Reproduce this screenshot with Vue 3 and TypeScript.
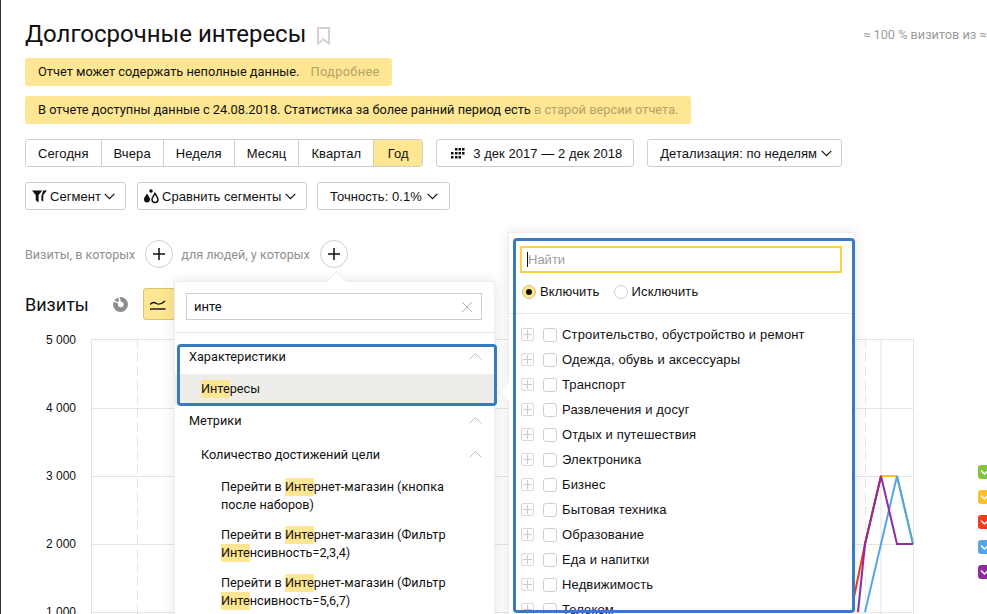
<script setup lang="ts">
type Chunk = { text: string; hit?: boolean };

const periods = ['Сегодня', 'Вчера', 'Неделя', 'Месяц', 'Квартал', 'Год'];
const axisLabels = ['5 000', '4 000', '3 000', '2 000', '1 000'];
const legendColors = ['#85c441', '#fdc025', '#f9391c', '#58a5e4', '#8e2d9c'];

const interests = [
  'Строительство, обустройство и ремонт',
  'Одежда, обувь и аксессуары',
  'Транспорт',
  'Развлечения и досуг',
  'Отдых и путешествия',
  'Электроника',
  'Бизнес',
  'Бытовая техника',
  'Образование',
  'Еда и напитки',
  'Недвижимость',
  'Телеком',
];

const goals: Chunk[][][] = [
  [
    [{ text: 'Перейти в ' }, { text: 'Инте', hit: true }, { text: 'рнет-магазин (кнопка' }],
    [{ text: 'после наборов)' }],
  ],
  [
    [{ text: 'Перейти в ' }, { text: 'Инте', hit: true }, { text: 'рнет-магазин (Фильтр' }],
    [{ text: 'Инте', hit: true }, { text: 'нсивность=2,3,4)' }],
  ],
  [
    [{ text: 'Перейти в ' }, { text: 'Инте', hit: true }, { text: 'рнет-магазин (Фильтр' }],
    [{ text: 'Инте', hit: true }, { text: 'нсивность=5,6,7)' }],
  ],
];

const series = [
  { color: '#85c441', points: '806,137 822,205' },
  { color: '#fdc025', points: '774,205 790,137 806,137' },
  { color: '#f9391c', points: '758,282 774,205 790,137' },
  { color: '#58a5e4', points: '774,273 806,137 822,205' },
  { color: '#8e2d9c', points: '767,273 774,205 790,137 806,205 822,205' },
];

const horizontalLines = [0, 69, 137, 205, 273];
</script>

<template>
  <div class="page">
    <div class="title-row">
      <h1 class="title">Долгосрочные интересы</h1>
      <svg class="bookmark" width="13" height="18" viewBox="0 0 13 18">
        <path d="M1 1h11v15.500l-5.500-4-5.500 4z" fill="none" stroke="#d2d2d2" stroke-width="2" />
      </svg>
      <span class="sampling">≈ 100 % визитов из ≈ 100 000</span>
    </div>

    <div class="alert first">
      Отчет может содержать неполные данные.<span class="alert-link gap">Подробнее</span>
    </div>
    <div class="alert second">
      В отчете доступны данные с 24.08.2018. Статистика за более ранний период есть
      <span class="alert-link">в старой версии отчета.</span>
    </div>

    <div class="toolbar periods-row">
      <div class="period-group">
        <button
          v-for="p in periods"
          :key="p"
          class="period"
          :class="{ active: p === 'Год' }"
        >
          {{ p }}
        </button>
      </div>
      <button class="btn date-btn">
        <svg width="15" height="11" viewBox="0 0 15 11" fill="#111">
          <rect x="5" y="0" width="2.500" height="2.500" /><rect x="8.500" y="0" width="2.500" height="2.500" /><rect x="12" y="0" width="2.500" height="2.500" />
          <rect x="1" y="4" width="2.500" height="2.500" /><rect x="5" y="4" width="2.500" height="2.500" /><rect x="8.500" y="4" width="2.500" height="2.500" /><rect x="12" y="4" width="2.500" height="2.500" />
          <rect x="1" y="8" width="2.500" height="2.500" /><rect x="5" y="8" width="2.500" height="2.500" /><rect x="8.500" y="8" width="2.500" height="2.500" />
        </svg>
        3 дек 2017 — 2 дек 2018
      </button>
      <button class="btn detail-btn">
        Детализация: по неделям
        <svg class="chev" width="11" height="7" viewBox="0 0 11 7"><path d="M.7.9l4.800 4.800L10.300.9" /></svg>
      </button>
    </div>

    <div class="toolbar segments-row">
      <button class="btn segment-btn">
        <svg width="15" height="13" viewBox="0 0 16 13" fill="#111">
          <path d="M0 0h11L7 5v8L4 10.500V5z" />
          <path d="M12 0h4l-4 5v7l-2-1.500V6z" />
        </svg>
        Сегмент
        <svg class="chev" width="11" height="7" viewBox="0 0 11 7"><path d="M.7.9l4.800 4.800L10.300.9" /></svg>
      </button>
      <button class="btn compare-btn">
        <svg width="16" height="15" viewBox="0 0 16 15">
          <path d="M4 4.500c1.500 2.500 3 4 3 6a3 3 0 0 1-6 0c0-2 1.500-3.500 3-6z" fill="#111" />
          <path d="M12 4.500c1.500 2.500 3 4 3 6a3 3 0 0 1-6 0c0-2 1.500-3.500 3-6z" fill="none" stroke="#111" stroke-width="1.500" />
          <circle cx="8" cy="2" r="1.800" fill="#111" />
        </svg>
        Сравнить сегменты
        <svg class="chev" width="11" height="7" viewBox="0 0 11 7"><path d="M.7.9l4.800 4.800L10.300.9" /></svg>
      </button>
      <button class="btn accuracy-btn">
        Точность: 0.1%
        <svg class="chev" width="11" height="7" viewBox="0 0 11 7"><path d="M.7.9l4.800 4.800L10.300.9" /></svg>
      </button>
    </div>

    <div class="filter-row">
      <span class="filter-label">Визиты, в которых</span>
      <span class="plus-circle">
        <svg width="12" height="12" viewBox="0 0 12 12"><path d="M6 0v12M0 6h12" stroke="#111" stroke-width="1.500" /></svg>
      </span>
      <span class="filter-label">для людей, у которых</span>
      <span class="plus-circle">
        <svg width="12" height="12" viewBox="0 0 12 12"><path d="M6 0v12M0 6h12" stroke="#111" stroke-width="1.500" /></svg>
      </span>
    </div>

    <div class="chart-head">
      <span class="chart-title">Визиты</span>
      <svg class="pie" width="15" height="15" viewBox="0 0 16 16">
        <path d="M8 0a8 8 0 1 1-8 8c0-1 .2-2 .6-3L5.500 7A3 3 0 1 0 8.500 5L7 .1c.3 0 .7-.1 1-.1z" fill="#8d8d8d" />
        <path d="M5.500 .4L6.500 4 4.500 5.500 1.500 3.500A8 8 0 0 1 5.500 .4z" fill="#8d8d8d" />
      </svg>
      <button class="line-btn">
        <svg width="16" height="12" viewBox="0 0 16 12">
          <path d="M0 6.500c2-2.500 4-2.500 6.500-1s4.500 1 8.500-2.500" fill="none" stroke="#111" stroke-width="1.400" />
          <path d="M0 11h15.500" stroke="#111" stroke-width="1.400" />
        </svg>
      </button>
    </div>

    <div class="chart">
      <div class="axis">
        <div v-for="l in axisLabels" :key="l" class="axis-label">{{ l }}</div>
      </div>
      <svg class="plot" width="823" height="275" viewBox="0 0 823 275">
        <line v-for="y in horizontalLines" :key="y" x1="0" :y1="y + 0.5" x2="822" :y2="y + 0.5" class="grid" />
        <line x1="0.500" y1="0" x2="0.500" y2="275" class="grid" />
        <line x1="46.500" y1="0" x2="46.500" y2="275" class="grid dash" />
        <line x1="774.500" y1="0" x2="774.500" y2="275" class="grid dash" />
        <line x1="790" y1="0" x2="790" y2="275" class="grid" />
        <line x1="822.500" y1="0" x2="822.500" y2="275" class="grid" />
        <polyline
          v-for="s in series"
          :key="s.color"
          :points="s.points"
          :stroke="s.color"
          class="serie"
        />
      </svg>
      <div class="legend">
        <span v-for="c in legendColors" :key="c" class="legend-box" :style="{ background: c }">
          <svg width="10" height="7" viewBox="0 0 10 7"><path d="M1 1.500l3.500 3.500L9 1" fill="none" stroke="#fff" stroke-width="1.600" /></svg>
        </span>
      </div>
    </div>

    <!-- Список атрибутов -->
    <div class="popup attr-popup">
      <span class="arrow arrow-top"></span>
      <div class="search-wrap">
        <div class="search">
          <span>инте</span>
          <svg width="12" height="12" viewBox="0 0 12 12"><path d="M1 1l10 10M11 1L1 11" stroke="#b5b5b5" stroke-width="1" /></svg>
        </div>
      </div>
      <div class="tree">
        <div class="tree-head">
          Характеристики
          <svg class="up" width="13" height="7" viewBox="0 0 13 7"><path d="M.5 6.500l6-6 6 6" /></svg>
        </div>
        <div class="tree-selected"><mark>Инте</mark>ресы</div>
        <div class="tree-head metrics">
          Метрики
          <svg class="up" width="13" height="7" viewBox="0 0 13 7"><path d="M.5 6.500l6-6 6 6" /></svg>
        </div>
        <div class="tree-head sub">
          Количество достижений цели
          <svg class="up" width="13" height="7" viewBox="0 0 13 7"><path d="M.5 6.500l6-6 6 6" /></svg>
        </div>
        <div v-for="(goal, i) in goals" :key="i" class="goal">
          <div v-for="(line, j) in goal" :key="j">
            <template v-for="(c, k) in line" :key="k">
              <mark v-if="c.hit">{{ c.text }}</mark><template v-else>{{ c.text }}</template>
            </template>
          </div>
        </div>
      </div>
    </div>
    <div class="callout callout-attr"></div>

    <!-- Значения атрибута -->
    <div class="popup value-popup">
      <span class="arrow arrow-left"></span>
      <div class="value-head">
        <div class="find"><i class="caret"></i>Найти</div>
        <div class="radios">
          <label class="radio"><span class="dot on"></span>Включить</label>
          <label class="radio"><span class="dot"></span>Исключить</label>
        </div>
      </div>
      <div class="value-list">
        <div v-for="name in interests" :key="name" class="value-row">
          <span class="expander">
            <svg width="9" height="9" viewBox="0 0 9 9"><path d="M4.500 0v9M0 4.500h9" stroke="#c9c9c9" stroke-width="1.200" /></svg>
          </span>
          <span class="check"></span>
          {{ name }}
        </div>
      </div>
    </div>
    <div class="callout callout-value"></div>
  </div>
</template>

<style scoped>
.page {
  position: relative;
  box-sizing: border-box;
  width: 987px;
  height: 614px;
  overflow: hidden;
  padding: 20px 0 0 24px;
  border-left: 1px solid #333;
  background: #fff;
  color: #111;
  font-family: Roboto, "Liberation Sans", sans-serif;
  font-size: 12.700px;
}

.title-row {
  display: flex;
  align-items: center;
  height: 28px;
  white-space: nowrap;
}

.title {
  flex: none;
  margin: 0;
  font-size: 24px;
  font-weight: 400;
  line-height: 28px;
}

.bookmark {
  flex: none;
  margin: 3px 0 0 11px;
}

.sampling {
  flex: none;
  margin-left: 533px;
  font-size: 12.700px;
  color: #9b9b9b;
}

.alert {
  box-sizing: border-box;
  height: 28px;
  padding: 0 13px;
  border-radius: 3px;
  background: #fee692;
  font-size: 12.800px;
  line-height: 28px;
  white-space: nowrap;
}

.first {
  width: 367px;
  margin-top: 10px;
}

.second {
  width: 666px;
  margin-top: 10px;
}

.alert-link {
  color: #b2a36a;
}

.alert-link.gap {
  margin-left: 11px;
  letter-spacing: 0.350px;
}

.toolbar {
  display: flex;
  height: 28px;
}

.periods-row {
  margin-top: 15px;
}

.segments-row {
  margin-top: 15px;
}

.period-group {
  display: flex;
  flex: none;
  border: 1px solid #cfcfcf;
  border-radius: 3px;
  overflow: hidden;
}

button {
  margin: 0;
  padding: 0;
  color: #111;
  background: #fff;
  font-family: "Liberation Sans", Arial, sans-serif;
  font-size: 13px;
  letter-spacing: 0.050px;
}

.period {
  box-sizing: border-box;
  border: 0;
  border-right: 1px solid #cfcfcf;
  padding: 0 12px;
  letter-spacing: 0.100px;
}

.period:last-child {
  width: 48px;
  border-right: 0;
}

.period.active {
  background: #fee692;
}

.btn {
  display: flex;
  flex: none;
  align-items: center;
  box-sizing: border-box;
  height: 28px;
  border: 1px solid #cfcfcf;
  border-radius: 3px;
  white-space: nowrap;
}

.chev {
  fill: none;
  stroke: #111;
  stroke-width: 1.200;
}

.date-btn {
  width: 198px;
  margin-left: 13px;
  padding-left: 13px;
  gap: 8px;
}

.detail-btn {
  width: 195px;
  margin-left: 13px;
  padding-left: 12px;
  gap: 4px;
}

.segment-btn {
  width: 101px;
  padding-left: 6px;
  gap: 3px;
}

.compare-btn {
  width: 170px;
  margin-left: 11px;
  padding-left: 5px;
  gap: 3px;
}

.accuracy-btn {
  width: 133px;
  margin-left: 10px;
  padding-left: 12px;
  gap: 5px;
}

.filter-row {
  display: flex;
  align-items: center;
  height: 28px;
  margin-top: 30px;
  color: #8f8f8f;
  font-size: 12.600px;
}

.filter-row .filter-label {
  white-space: nowrap;
}

.plus-circle {
  display: flex;
  flex: none;
  align-items: center;
  justify-content: center;
  box-sizing: border-box;
  width: 28px;
  height: 28px;
  margin: 0 8px 0 10px;
  border: 1px solid #cfcfcf;
  border-radius: 50%;
}

.chart-head {
  display: flex;
  align-items: center;
  height: 32px;
  margin-top: 20px;
}

.chart-title {
  width: 88px;
  font-size: 18px;
}

.line-btn {
  display: flex;
  align-items: center;
  justify-content: center;
  box-sizing: border-box;
  width: 40px;
  height: 32px;
  margin-left: 15px;
  padding-right: 10px;
  border: 1px solid #d9c270;
  border-radius: 3px;
  background: #fee692;
}

.chart {
  display: flex;
  margin-top: 19px;
}

.axis {
  flex: none;
  width: 51px;
  margin-top: -7px;
  font-family: "Liberation Sans", Arial, sans-serif;
  font-size: 12px;
  text-align: right;
}

.axis-label {
  height: 68px;
  line-height: 16px;
}

.plot {
  flex: none;
  margin-left: 15px;
}

.grid {
  stroke: #e3e3e3;
  stroke-width: 1;
}

.dash {
  stroke-dasharray: 9 5;
}

.serie {
  fill: none;
  stroke-width: 2;
}

.legend {
  display: flex;
  flex: none;
  flex-direction: column;
  gap: 11px;
  margin: 126px 0 0 64px;
}

.legend-box {
  display: flex;
  align-items: center;
  justify-content: center;
  width: 14px;
  height: 14px;
  border-radius: 3px;
}

.popup {
  position: absolute;
  box-sizing: border-box;
  background: #fff;
  border: 1px solid #ededed;
  box-shadow: 0 0 12px rgba(0, 0, 0, 0.1);
}

.attr-popup {
  left: 173px;
  top: 281px;
  width: 321px;
  height: 340px;
}

.arrow {
  position: absolute;
  width: 14px;
  height: 14px;
  background: #fff;
  border: 1px solid #ededed;
  transform: rotate(45deg);
}

.arrow-top {
  left: 154px;
  top: -8px;
  border-right: 0;
  border-bottom: 0;
}

.arrow-left {
  left: -8px;
  top: 151px;
  border-top: 0;
  border-right: 0;
}

.search-wrap {
  position: relative;
  height: 51px;
  padding: 11px 12px 0 11px;
  box-sizing: border-box;
  border-bottom: 1px solid #e6e6e6;
}

.search {
  display: flex;
  align-items: center;
  justify-content: space-between;
  box-sizing: border-box;
  height: 27px;
  padding: 0 8px 0 7px;
  border: 1px solid #cfcfcf;
  font-size: 13px;
}

.tree {
  padding-top: 14px;
}

.tree-head {
  display: flex;
  align-items: center;
  justify-content: space-between;
  height: 19px;
  padding: 0 12px 0 14px;
}

.up {
  fill: none;
  stroke: #bdbdbd;
  stroke-width: 1;
}

.tree-selected {
  height: 31px;
  margin-top: 8px;
  padding-left: 26px;
  line-height: 29px;
  background: #eeede9;
}

.metrics {
  margin-top: 6px;
}

.sub {
  margin-top: 15px;
  padding-left: 26px;
}

.goal {
  margin-top: 12px;
  padding-left: 46px;
  line-height: 18px;
  white-space: nowrap;
}

.sub + .goal {
  margin-top: 14px;
}

mark {
  display: inline-block;
  height: 18px;
  background: #fee692;
  color: inherit;
  line-height: 18px;
}

.callout {
  position: absolute;
  box-sizing: border-box;
  border: 3px solid #3a7abf;
  border-radius: 4px;
  pointer-events: none;
}

.callout-attr {
  left: 176px;
  top: 344px;
  width: 320px;
  height: 62px;
}

.callout-value {
  left: 512px;
  top: 238px;
  width: 342px;
  height: 375px;
}

.value-popup {
  left: 507px;
  top: 232px;
  width: 347px;
  height: 390px;
}

.value-head {
  position: relative;
  height: 81px;
  padding: 13px 12px 0 11px;
  box-sizing: border-box;
  border-bottom: 1px solid #e6e6e6;
}

.find {
  display: flex;
  align-items: center;
  box-sizing: border-box;
  height: 27px;
  padding-left: 5px;
  border: 2px solid #fdd33f;
  font-family: "Liberation Sans", Arial, sans-serif;
  font-size: 13px;
  color: #9d9d9d;
}

.caret {
  width: 1px;
  height: 15px;
  background: #111;
}

.radios {
  display: flex;
  gap: 12px;
  margin-top: 10px;
  font-family: "Liberation Sans", Arial, sans-serif;
  font-size: 13px;
  letter-spacing: 0.150px;
}

.radio {
  display: flex;
  align-items: center;
  gap: 4px;
  height: 17px;
  margin-left: 2px;
}

.dot {
  position: relative;
  box-sizing: border-box;
  width: 14px;
  height: 14px;
  border: 1px solid #cfcfcf;
  border-radius: 50%;
}

.dot.on {
  border-color: #d9c270;
  background: #fee692;
}

.dot.on::after {
  content: "";
  position: absolute;
  left: 3px;
  top: 3px;
  width: 6px;
  height: 6px;
  border-radius: 50%;
  background: #111;
}

.value-list {
  padding: 8px 0 0 12px;
  font-family: "Liberation Sans", Arial, sans-serif;
  font-size: 13px;
  letter-spacing: 0.150px;
}

.value-row {
  display: flex;
  align-items: center;
  height: 25px;
  white-space: nowrap;
}

.expander {
  display: flex;
  align-items: center;
  justify-content: center;
  box-sizing: border-box;
  width: 13px;
  height: 13px;
  margin-right: 9px;
  border: 1px solid #d9d9d9;
  border-radius: 2px;
}

.check {
  box-sizing: border-box;
  width: 14px;
  height: 14px;
  margin-right: 5px;
  border: 1px solid #cfcfcf;
  border-radius: 3px;
}
</style>

<style>
html,
body {
  margin: 0;
  overflow: hidden;
  background: #fff;
}
</style>
